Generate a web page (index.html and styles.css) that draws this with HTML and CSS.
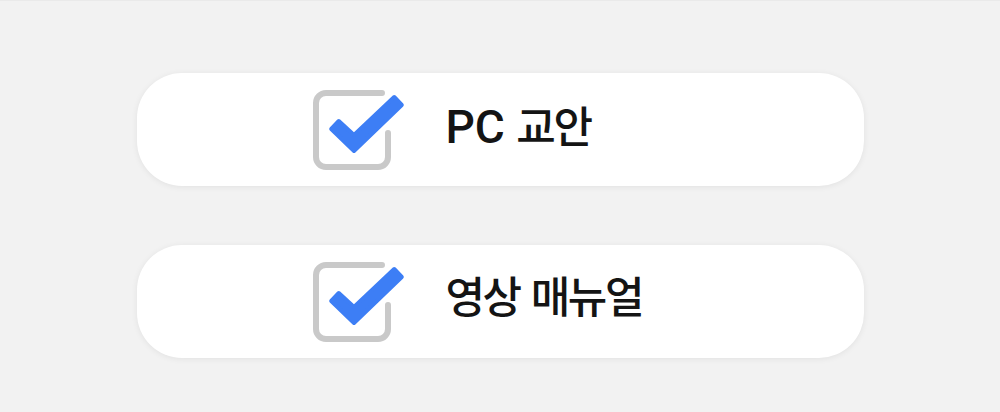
FILE: index.html
```html
<!DOCTYPE html>
<html lang="ko">
<head>
<meta charset="utf-8">
<link rel="stylesheet" href="styles.css">
</head>
<body>
<div class="list">
  <div class="card">
    <svg class="check" width="100" height="90" viewBox="0 0 100 90">
      <path class="box" d="M73 8 H17 A10 10 0 0 0 7 18 V72 A10 10 0 0 0 17 82 H69 A10 10 0 0 0 79 72 V48"/>
      <polygon class="tick" points="22.2,44 45,66 92.8,20 85.2,12 45,50 29.8,36"/>
    </svg>
    <span class="label"><span class="latin">PC </span>교안</span>
  </div>
  <div class="card">
    <svg class="check" width="100" height="90" viewBox="0 0 100 90">
      <path class="box" d="M73 8 H17 A10 10 0 0 0 7 18 V72 A10 10 0 0 0 17 82 H69 A10 10 0 0 0 79 72 V48"/>
      <polygon class="tick" points="22.2,44 45,66 92.8,20 85.2,12 45,50 29.8,36"/>
    </svg>
    <span class="label">영상 매뉴얼</span>
  </div>
</div>
</body>
</html>
```

FILE: styles.css
```css
html, body {
  margin: 0;
  padding: 0;
}
body {
  background: #f2f2f2;
  border-top: 1px solid #eaeaea;
  width: 1000px;
  height: 411px;
  font-family: Roboto, "Noto Sans CJK KR", sans-serif;
}
.list {
  display: flex;
  flex-direction: column;
  align-items: center;
  gap: 59px;
  padding-top: 72px;
}
.card {
  width: 727px;
  height: 113px;
  box-sizing: border-box;
  background: #fff;
  border-radius: 45px;
  box-shadow: 0 1px 6px rgba(0, 0, 0, 0.07);
  display: flex;
  align-items: center;
  padding-left: 172px;
}
.check {
  display: block;
  flex: none;
}
.box {
  fill: none;
  stroke: #c9c9c9;
  stroke-width: 6;
  stroke-linecap: round;
}
.tick {
  fill: #3d7ef5;
  stroke: #3d7ef5;
  stroke-width: 4;
  stroke-linejoin: round;
}
.label {
  margin-left: 37px;
  margin-bottom: 6px;
  font-size: 43px;
  font-weight: 500;
  letter-spacing: -2.5px;
  word-spacing: 3px;
  line-height: 1;
  color: #141414;
}
.latin {
  font-size: 46px;
  letter-spacing: 0;
  word-spacing: 0;
}
```
